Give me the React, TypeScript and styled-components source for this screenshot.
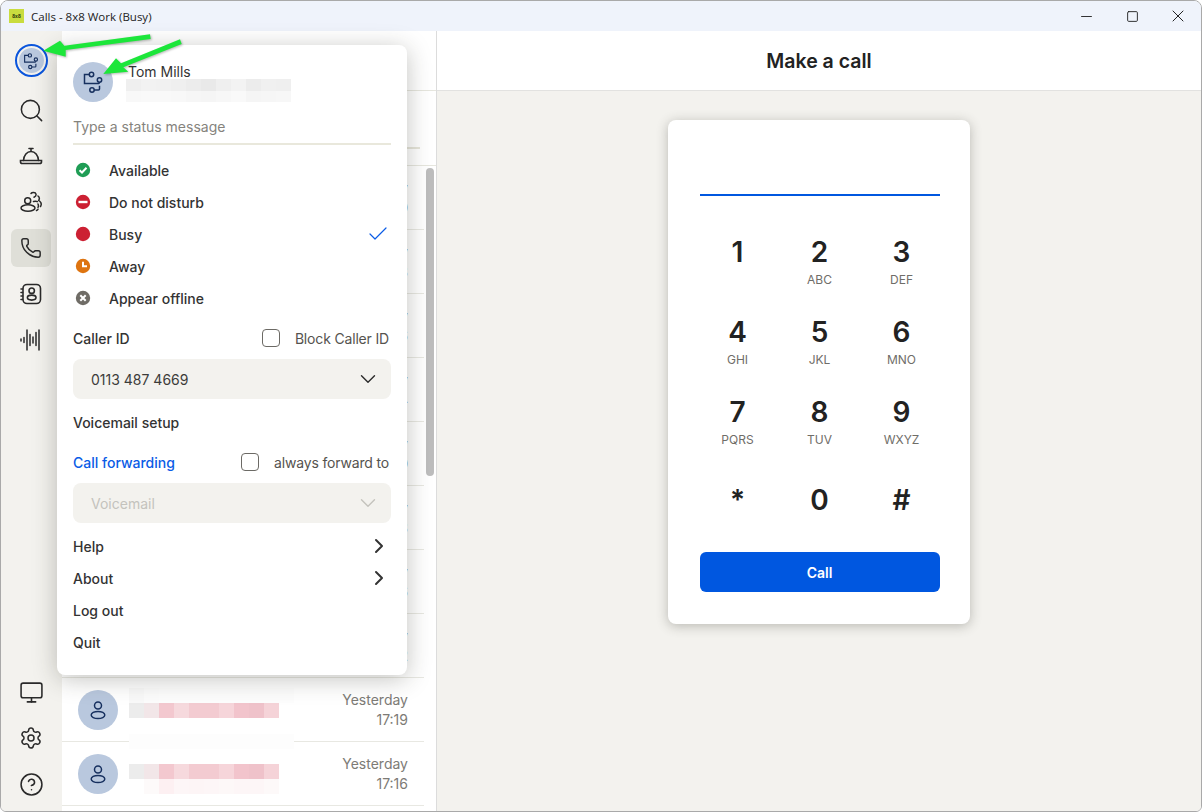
import React from "react";
import styled, { createGlobalStyle } from "styled-components";
import { Search, Phone, Monitor, Settings, CircleHelp, ChevronDown, ChevronRight, Check, Minus, Square, X } from "lucide-react";

const Global = createGlobalStyle`
  html, body { margin: 0; padding: 0; background: #fff; }
  body { font-family: Inter, "Liberation Sans", sans-serif; color: #2b2b2b; }
  * { box-sizing: border-box; }
`;

const Win = styled.div`
  position: relative; width: 1202px; height: 812px; overflow: hidden;
  display: flex; flex-direction: column;
  border: 1px solid #a9a9a9; border-radius: 8px 8px 6px 6px; background: #fff;
`;
const TitleBar = styled.header`
  height: 30px; flex: none; display: flex; align-items: center; padding-left: 8px;
  background: #eff3fb; font: 11.5px "Open Sans", "Noto Sans", sans-serif; color: #222;
`;
const Logo = styled.div`
  width: 15px; height: 14px; background: #c9dc3f; color: #26300a; margin-right: 7px;
  display: flex; align-items: center; justify-content: center;
  font: 700 5px "Liberation Sans", sans-serif;
`;
const WinButtons = styled.div`margin-left: auto; display: flex;`;
const WinButton = styled.div`
  width: 46px; height: 30px; display: flex; align-items: center; justify-content: center; color: #222;
`;
const Body = styled.div`flex: 1; min-height: 0; display: flex;`;
const Rail = styled.nav`
  width: 61px; flex: none; background: #f3f2ee; display: flex; flex-direction: column; align-items: center;
  padding: 12px 1px 0 0;
`;
const RailItem = styled.div<{ $active?: boolean }>`
  width: 40px; height: 38px; flex: none; margin-bottom: 8px; border-radius: 6px;
  display: flex; align-items: center; justify-content: center; color: #2a2a2a;
  background: ${p => (p.$active ? "#dfdfd8" : "transparent")};
`;
const RailRing = styled.div`
  width: 33px; height: 33px; flex: none; margin: 1px 0 14px; border-radius: 50%;
  border: 2px solid #0a55dc; padding: 2px;
  display: flex; align-items: center; justify-content: center;
`;
const RingFace = styled.div`
  width: 25px; height: 25px; border-radius: 50%; background: #b9c8de; color: #17305f;
  display: flex; align-items: center; justify-content: center;
`;
const RailSpacer = styled.div`flex: 1;`;

const ListPane = styled.section`
  width: 375px; flex: none; background: #fff; border-right: 1px solid #dcdcdc; position: relative;
  display: flex; flex-direction: column; overflow: hidden;
`;
const ListHead = styled.div`height: 60px; flex: none; border-bottom: 1px solid #e6e6de;`;
const ListFilter = styled.div`
  height: 75px; flex: none; padding-top: 56px; border-bottom: 1px solid #e6e6de; padding-right: 16px;
`;
const FilterLine = styled.div`height: 2px; background: #e6e5da;`;
const Rows = styled.div`display: flex; flex-direction: column; padding-right: 12px;`;
const Row = styled.div`
  height: 64px; flex: none; display: flex; align-items: center; border-bottom: 1px solid #e8e8e2;
  padding-left: 16px; padding-right: 16px; position: relative;
`;
const Avatar = styled.div<{ $size: number }>`
  width: ${p => p.$size}px; height: ${p => p.$size}px; border-radius: 50%; flex: none;
  background: #b9c8de; color: #17305f; display: flex; align-items: center; justify-content: center;
`;
const RowTime = styled.div`
  margin-left: auto; text-align: right; font-size: 14px; line-height: 20px; color: #7d7b76;
`;
const Mosaic = styled.div<{ $top: number }>`
  position: absolute; left: 67px; top: ${p => p.$top}px; width: 165px; display: flex; flex-direction: column;
`;
const MosaicRow = styled.div`display: flex; height: 15px;`;
const MosaicCell = styled.div<{ $c: string }>`width: 15px; flex: none; background: ${p => p.$c};`;
const ScrollThumb = styled.div`
  position: absolute; left: 364px; top: 137px; width: 8px; height: 308px; border-radius: 4px; background: #bdbdbd;
`;

const Main = styled.main`flex: 1; min-width: 0; display: flex; flex-direction: column; background: #f3f2ee;`;
const MainHead = styled.div`
  height: 60px; flex: none; background: #fff; border-bottom: 1px solid #e2e2e0;
  display: flex; align-items: center; justify-content: center;
  font-size: 19.5px; font-weight: 600; color: #222;
`;
const MainArea = styled.div`flex: 1; display: flex; justify-content: center; padding-top: 29px; padding-right: 1px;`;
const Card = styled.div`
  width: 302px; height: 504px; background: #fff; border-radius: 8px; padding: 0 30px 0 32px;
  box-shadow: 0 2px 12px rgba(50,50,40,.3); display: flex; flex-direction: column;
`;
const Dialed = styled.div`height: 76px; flex: none; border-bottom: 2px solid #0057e0;`;
const KeyGrid = styled.div`
  margin-top: 32px; display: grid; grid-template-columns: repeat(3, 76px); justify-content: space-between;
  grid-auto-rows: 80px;
`;
const Key = styled.div<{ $low?: boolean }>`
  display: flex; flex-direction: column; align-items: center; padding-top: ${p => (p.$low ? "8px" : "0")};
`;
const Digit = styled.div`font-size: 28px; line-height: 48px; height: 48px; font-weight: 600; color: #222;`;
const Letters = styled.div`font-size: 12px; line-height: 16px; margin-top: -4px; color: #6f6d68;`;
const CallButton = styled.button`
  margin-top: 4px; height: 40px; border: 0; border-radius: 6px; background: #0057e0; color: #fff;
  font: 600 14px Inter, sans-serif;
`;

const Popup = styled.div`
  position: absolute; left: 56px; top: 44px; width: 350px; height: 630px; background: #fff; border-radius: 8px;
  padding: 17px 16px 0; box-shadow: 0 4px 24px rgba(40,40,30,.28); display: flex; flex-direction: column;
`;
const Identity = styled.div`display: flex; height: 40px; gap: 13px;`;
const IdentityText = styled.div`display: flex; flex-direction: column; padding-top: 2px; margin-left: 2px;`;
const Name = styled.div`font-size: 14px; line-height: 16px; color: #333;`;
const IdentityBlur = styled.div`
  display: flex; flex-direction: column; height: 27px; overflow: hidden; margin: -1px 0 0 -2px;
`;
const StatusInput = styled.div`
  margin-top: 16px; height: 27px; font-size: 14px; line-height: 17px; color: #85837d;
  border-bottom: 2px solid #e9e8dc; flex: none; width: 318px;
`;
const StatusList = styled.div`margin-top: 9px; display: flex; flex-direction: column;`;
const StatusRow = styled.div`
  height: 32px; display: flex; align-items: center; gap: 18px; padding-left: 2px; padding-right: 1px;
  font-size: 14px; font-weight: 500; color: #333;
`;
const RowEnd = styled.span`margin-left: auto; display: flex; color: #0a5ce6;`;
const FieldHead = styled.div`
  height: 24px; display: flex; align-items: center; justify-content: space-between;
  font-size: 14px; font-weight: 500; width: 316px; color: #333; flex: none; margin-top: 12px;
`;
const BlueHead = styled.span`color: #0a5ce6;`;
const CheckLabel = styled.label`
  display: flex; align-items: center; gap: 15px; font-weight: 400; color: #55534f; letter-spacing: -0.17px;
`;
const Box = styled.span`
  width: 18px; height: 18px; border: 1.5px solid #6c6a65; border-radius: 4px; background: #fff;
`;
const Select = styled.div<{ $off?: boolean }>`
  margin-top: 9px; height: 40px; width: 318px; flex: none; border-radius: 8px; background: #f3f2ee;
  display: flex; align-items: center; justify-content: space-between; padding: 0 10px 0 18px;
  font-size: 14px; color: ${p => (p.$off ? "#c4c3bd" : "#3c3c3a")};
`;
const PlainRow = styled.div<{ $gap?: boolean }>`
  height: 32px; flex: none; width: 318px; display: flex; align-items: center; justify-content: space-between;
  font-size: 14px; font-weight: 500; color: #333; margin-top: ${p => (p.$gap ? "7px" : "0")};
`;
const Overlay = styled.svg`
  position: absolute; left: -1px; top: -1px; pointer-events: none;
  filter: drop-shadow(1px 1px 1px rgba(0,0,0,.28));
`;

const Org = ({ s }: { s: number }) => (
  <svg width={s} height={s} viewBox="0 0 24 24" fill="none" stroke="currentColor" strokeWidth="1.5">
    <circle cx="10.5" cy="4.5" r="2.2" />
    <circle cx="18.500" cy="10" r="2.2" />
    <circle cx="11" cy="20" r="2.2" />
    <path d="M8.200 4.500H3.500V13.500H16.500C17.800 13.500 18.500 13 18.500 12.200M13.200 20H17.500C18.200 20 18.500 19.600 18.500 19V15.800" />
  </svg>
);
const Person = () => (
  <svg width="24" height="24" viewBox="0 0 24 24" fill="none" stroke="currentColor" strokeWidth="1.5">
    <circle cx="12" cy="7.500" r="3.500" />
    <ellipse cx="12" cy="17" rx="6.800" ry="3.600" />
  </svg>
);
const Bell = () => (
  <svg width="24" height="24" viewBox="0 0 24 24" fill="none" stroke="currentColor" strokeWidth="1.6" strokeLinecap="round">
    <path d="M10 4.500h4M12 4.500V7M4.500 16.500C4.800 11 8 7.500 12 7.500s7.200 3.500 7.500 9" />
    <path d="M1.500 16.500h21v1.200c0 1-.8 1.800-1.800 1.800H3.300c-1 0-1.800-.8-1.800-1.800z" />
  </svg>
);
const People = () => (
  <svg width="24" height="24" viewBox="0 0 24 24" fill="none" stroke="currentColor" strokeWidth="1.5" strokeLinecap="round">
    <circle cx="8.700" cy="10.800" r="3" />
    <ellipse cx="9" cy="18" rx="7" ry="3.200" />
    <path d="M12 3.500c1-1.400 4.500-1.400 5 .6.300 1.400-.7 2.500-2 3.100M19 6c1.500 1 1.800 3 .6 4.500M14.500 11.500c1.500-.3 3-.3 3.800.2M20.500 11c1.500 1.200 2.200 3.500 1 5.500M19 14c.5 1 .5 2.500 0 3.500M17.500 20.500c.8-.3 1.300-.8 1.500-1.300" />
  </svg>
);
const Contacts = () => (
  <svg width="24" height="24" viewBox="0 0 24 24" fill="none" stroke="currentColor" strokeWidth="1.6" strokeLinecap="round">
    <rect x="4" y="2.500" width="17.500" height="19" rx="4" />
    <circle cx="12.700" cy="8.700" r="2.700" />
    <ellipse cx="12.700" cy="15.600" rx="4.300" ry="2.500" />
    <path d="M2 7h1.500M2 10.500h1.500M2 14h1.500M2 17.500h1.500" />
  </svg>
);
const Wave = () => (
  <svg width="24" height="24" viewBox="0 0 24 24" fill="none" stroke="currentColor" strokeWidth="1.5" strokeLinecap="round">
    <path d="M2 11v2M5 9.500v5M8 2v20M11 6.500v11M14 9v6M17 4.500v13M20 2v20" />
  </svg>
);

const StatusDot = ({ kind }: { kind: string }) => {
  const c: Record<string, string> = { ok: "#1f9d55", dnd: "#cc2033", busy: "#cc2033", away: "#de7410", off: "#6f6c66" };
  return (
    <svg width="16" height="16" viewBox="0 0 16 16" fill="none">
      <circle cx="8" cy="8" r="7.200" fill={c[kind]} />
      {kind === "ok" && <path d="M4.500 8.200 7 10.500l4.500-4.800" stroke="#fff" strokeWidth="2" />}
      {kind === "dnd" && <rect x="3.500" y="6.800" width="9" height="2.400" fill="#fff" />}
      {kind === "away" && <path d="M8 3.800V8.300H12" stroke="#fff" strokeWidth="2" />}
      {kind === "off" && <path d="M5.300 5.300l5.400 5.400M10.700 5.300l-5.400 5.400" stroke="#fff" strokeWidth="2" />}
    </svg>
  );
};

const statuses = [
  { kind: "ok", label: "Available" },
  { kind: "dnd", label: "Do not disturb" },
  { kind: "busy", label: "Busy", on: true },
  { kind: "away", label: "Away" },
  { kind: "off", label: "Appear offline" },
];

const keys = [
  ["1", ""], ["2", "ABC"], ["3", "DEF"],
  ["4", "GHI"], ["5", "JKL"], ["6", "MNO"],
  ["7", "PQRS"], ["8", "TUV"], ["9", "WXYZ"],
  ["*", ""], ["0", ""], ["#", ""],
];

const listRows = ["17:40", "17:38", "17:36", "17:34", "17:30", "17:28", "17:26", "17:22", "17:19", "17:16"];

const pink = ["#ececec", "#f2e6e8", "#f3c8cf", "#f6d9dd", "#f3cbd1", "#f3cbd1", "#f6d5da", "#f2c4cc", "#efc2ca", "#f5d3d8"];
const faint = ["#f9f9f9", "#fcfcfc", ...Array(9).fill("#fdfdfd")];
const faintLow = ["#ffffff", "#fdfafa", "#fdf0f2", "#fdf6f7", "#fdf5f6", "#fdf6f7", "#fdf8f8", "#fdf6f7", "#fdf6f7", "#fdf9f9"];
const strip = Array(11).fill("#fdfdfd");
const idTop = ["#efefef", "#f2f2f2", "#f1f1f1", "#efefef", "#ececec", "#e9e9e9", "#efefef", "#f3f3f3", "#ececec", "#f0f0f0", "#efefef"];
const idLow = ["#f8f8f8", "#f9f9f9", "#f9f9f9", "#f8f8f8", "#f6f6f6", "#f5f5f5", "#f7f7f7", "#f9f9f9", "#f5f5f5", "#f6f6f6", "#f7f7f7"];

const cells = (a: string[]) => a.map((c, i) => <MosaicCell key={i} $c={c} />);

export default function App() {
  return (
    <>
      <Global />
      <Win>
        <TitleBar>
          <Logo>8x8</Logo>
          Calls - 8x8 Work (Busy)
          <WinButtons>
            <WinButton><Minus size={17} strokeWidth={1.3} /></WinButton>
            <WinButton><Square size={13} strokeWidth={1.7} /></WinButton>
            <WinButton><X size={20} strokeWidth={1.2} /></WinButton>
          </WinButtons>
        </TitleBar>
        <Body>
          <Rail>
            <RailRing><RingFace><Org s={18} /></RingFace></RailRing>
            <RailItem><Search size={27} strokeWidth={1.35} /></RailItem>
            <RailItem><Bell /></RailItem>
            <RailItem><People /></RailItem>
            <RailItem $active><Phone size={22} strokeWidth={1.6} /></RailItem>
            <RailItem><Contacts /></RailItem>
            <RailItem><Wave /></RailItem>
            <RailSpacer />
            <RailItem><Monitor size={25} strokeWidth={1.5} /></RailItem>
            <RailItem><Settings size={24} strokeWidth={1.5} /></RailItem>
            <RailItem><CircleHelp size={25} strokeWidth={1.5} /></RailItem>
          </Rail>
          <ListPane>
            <ListHead />
            <ListFilter><FilterLine /></ListFilter>
            <Rows>
              {listRows.map((t, i) => (
                <Row key={i}>
                  <Avatar $size={40}><Person /></Avatar>
                  {i === 8 && (
                    <Mosaic $top={10}>
                      <MosaicRow>{cells(faint)}</MosaicRow>
                      <MosaicRow>{cells(pink)}</MosaicRow>
                    </Mosaic>
                  )}
                  {i === 9 && (
                    <Mosaic $top={-8}>
                      <MosaicRow>{cells(strip)}</MosaicRow>
                      <MosaicRow />
                      <MosaicRow>{cells(pink)}</MosaicRow>
                      <MosaicRow>{cells(faintLow)}</MosaicRow>
                    </Mosaic>
                  )}
                  <RowTime>Yesterday<br />{t}</RowTime>
                </Row>
              ))}
            </Rows>
            <ScrollThumb />
          </ListPane>
          <Main>
            <MainHead>Make a call</MainHead>
            <MainArea>
              <Card>
                <Dialed />
                <KeyGrid>
                  {keys.map(([d, l], i) => (
                    <Key key={d} $low={i > 8}>
                      <Digit>{d}</Digit>
                      {l && <Letters>{l}</Letters>}
                    </Key>
                  ))}
                </KeyGrid>
                <CallButton>Call</CallButton>
              </Card>
            </MainArea>
          </Main>
        </Body>

        <Popup>
          <Identity>
            <Avatar $size={40}><Org s={24} /></Avatar>
            <IdentityText>
              <Name>Tom Mills</Name>
              <IdentityBlur>
                <MosaicRow>{cells(idTop)}</MosaicRow>
                <MosaicRow>{cells(idLow)}</MosaicRow>
              </IdentityBlur>
            </IdentityText>
          </Identity>
          <StatusInput>Type a status message</StatusInput>
          <StatusList>
            {statuses.map(s => (
              <StatusRow key={s.label}>
                <StatusDot kind={s.kind} />
                {s.label}
                {s.on && <RowEnd><Check size={24} strokeWidth={1.2} /></RowEnd>}
              </StatusRow>
            ))}
          </StatusList>
          <FieldHead>
            Caller ID
            <CheckLabel><Box />Block Caller ID</CheckLabel>
          </FieldHead>
          <Select>0113 487 4669<ChevronDown size={26} strokeWidth={1.3} color="#2b2b2b" /></Select>
          <PlainRow $gap>Voicemail setup</PlainRow>
          <FieldHead>
            <BlueHead>Call forwarding</BlueHead>
            <CheckLabel><Box />always forward to</CheckLabel>
          </FieldHead>
          <Select $off>Voicemail<ChevronDown size={26} strokeWidth={1.3} color="#c4c3bd" /></Select>
          <PlainRow $gap>Help<ChevronRight size={24} strokeWidth={2} /></PlainRow>
          <PlainRow>About<ChevronRight size={24} strokeWidth={2} /></PlainRow>
          <PlainRow>Log out</PlainRow>
          <PlainRow>Quit</PlainRow>
        </Popup>

        <Overlay width="1202" height="812" viewBox="0 0 1202 812">
          <polygon points="150,34.300 150.700,39 65.700,50 65.700,56.700 43.300,50.700 60,40.700 64.300,45.700" fill="#1ce63a" />
          <polygon points="180,39.300 181.700,44 123.300,67.300 128.300,71.700 103.300,74 116,58.300 121,63.300" fill="#1ce63a" />
        </Overlay>
      </Win>
    </>
  );
}
